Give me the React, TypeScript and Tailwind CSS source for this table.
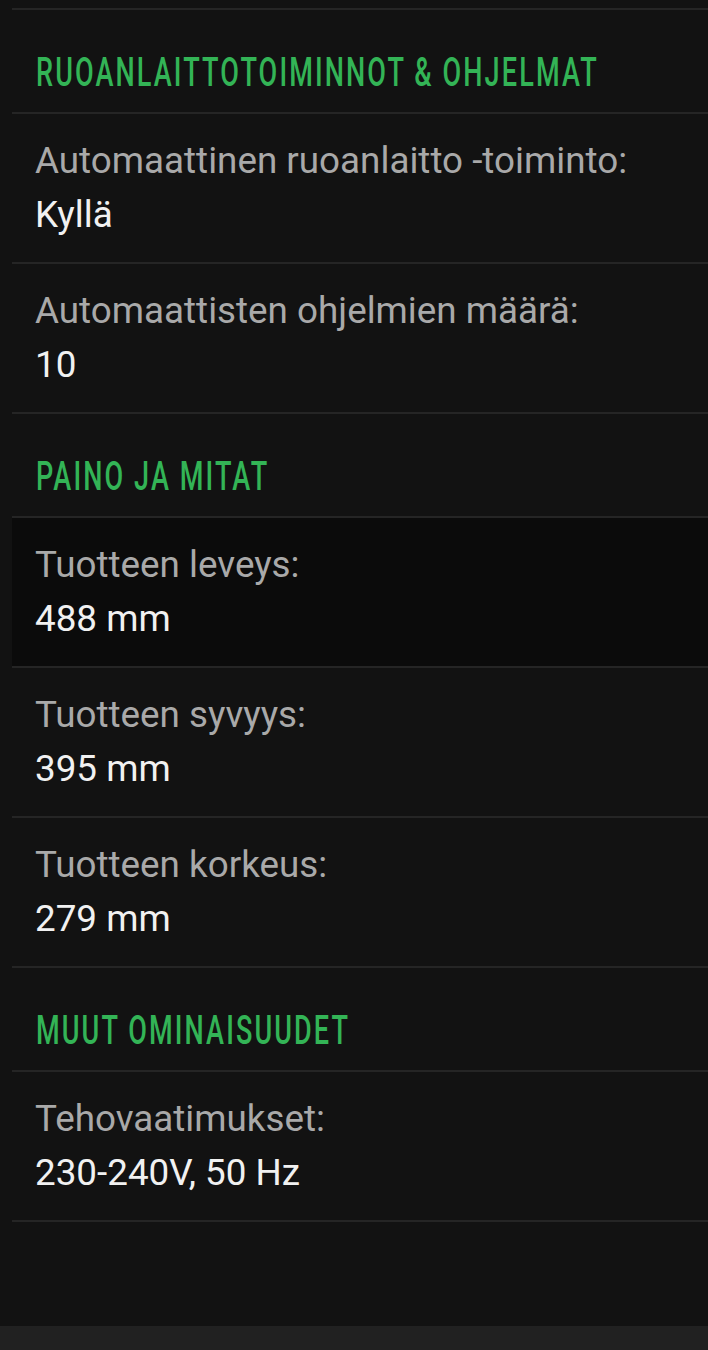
import React from 'react';

type Spec = { label: string; value: string; active?: boolean };
type Group = { title: string; specs: Spec[] };

const GROUPS: Group[] = [
  {
    title: 'Ruoanlaittotoiminnot & ohjelmat',
    specs: [
      { label: 'Automaattinen ruoanlaitto -toiminto:', value: 'Kyllä' },
      { label: 'Automaattisten ohjelmien määrä:', value: '10' },
    ],
  },
  {
    title: 'Paino ja mitat',
    specs: [
      { label: 'Tuotteen leveys:', value: '488 mm', active: true },
      { label: 'Tuotteen syvyys:', value: '395 mm' },
      { label: 'Tuotteen korkeus:', value: '279 mm' },
    ],
  },
  {
    title: 'Muut ominaisuudet',
    specs: [{ label: 'Tehovaatimukset:', value: '230-240V, 50 Hz' }],
  },
];

const SpecRow: React.FC<{ spec: Spec }> = ({ spec }) => (
  <div
    className={`h-[150px] border-b-2 border-[#252525] pl-[23px] pr-6 pt-[20px] text-[36.8px] leading-[54px] font-['Roboto',sans-serif] ${
      spec.active ? 'bg-[#0b0b0b]' : ''
    }`}
  >
    <div className="text-[#a9a9a9] whitespace-nowrap">{spec.label}</div>
    <div className="text-[#f1f1f1] whitespace-nowrap">{spec.value}</div>
  </div>
);

export default function App() {
  return (
    <div className="min-h-[1350px] bg-[#121212] flex flex-col">
      <div className="flex-1 pl-3 pt-2">
        <div className="border-t-2 border-[#252525]">
          {GROUPS.map((group) => (
            <section key={group.title}>
              {/* group heading */}
              <div className="h-[104px] border-b-2 border-[#252525] px-6 pt-[42px] overflow-hidden">
                <span className="inline-block origin-left scale-x-[0.66] whitespace-nowrap uppercase font-['Roboto',sans-serif] font-medium text-[41px] leading-[41px] tracking-[3.2px] text-[#33b456]">
                  {group.title}
                </span>
              </div>
              {group.specs.map((spec) => (
                <SpecRow key={spec.label} spec={spec} />
              ))}
            </section>
          ))}
        </div>
      </div>
      <div className="h-[24px] bg-[#212121]" />
    </div>
  );
}
